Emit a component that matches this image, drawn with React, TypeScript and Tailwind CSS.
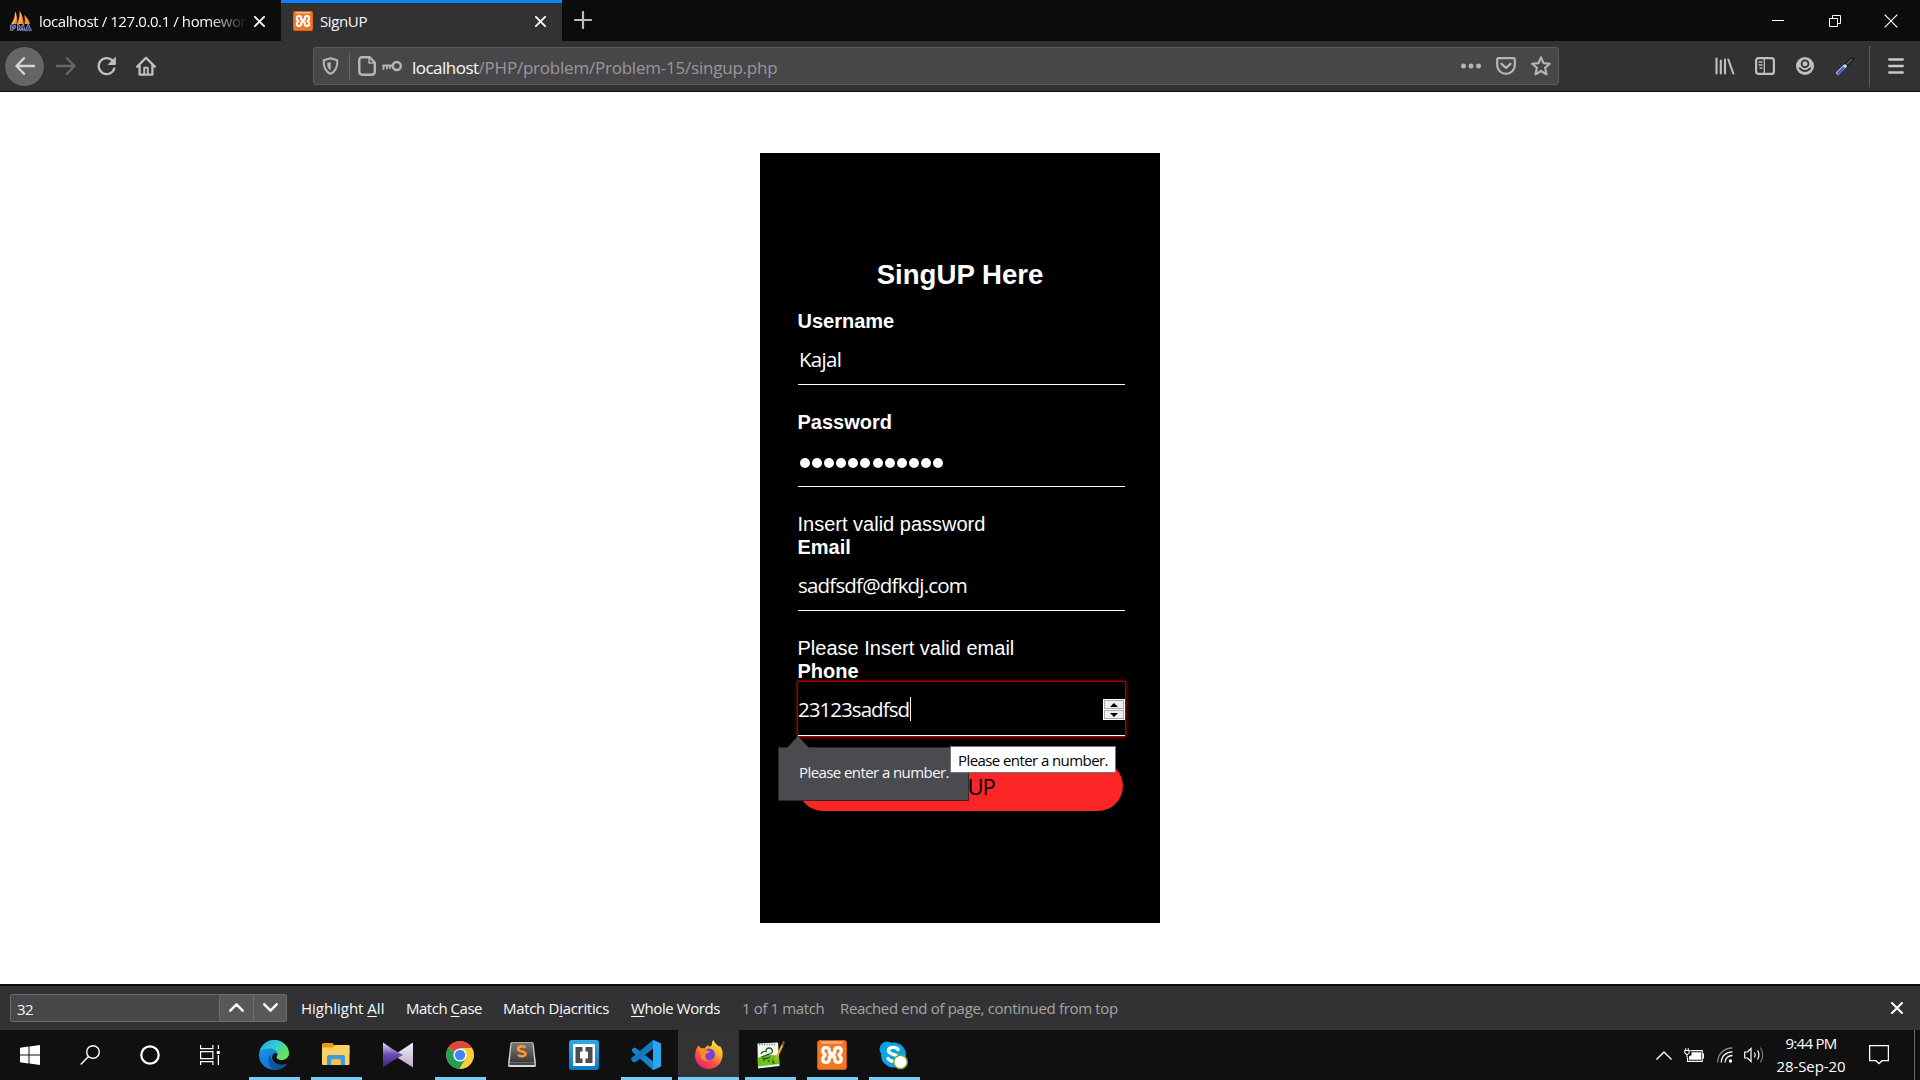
import type { ReactNode } from 'react';

function Glyph({ children, box = '0 0 20 20', cls = 'w-5 h-5 text-[#c0c0c1]' }: { children: ReactNode; box?: string; cls?: string }) {
  return (
    <svg viewBox={box} className={`block shrink-0 ${cls}`} fill="none" stroke="currentColor" strokeWidth="2.3" strokeLinecap="round" strokeLinejoin="round">
      {children}
    </svg>
  );
}

function Xampp({ cls }: { cls: string }) {
  return (
    <svg viewBox="0 0 30 30" className={`block shrink-0 ${cls}`}>
      <rect width="30" height="30" rx="3.5" fill="#f37623" />
      <rect x=".5" y=".5" width="29" height="29" rx="3" fill="none" stroke="#c9560d" />
      <path d="M3 1.6h24l-2 2H5z" fill="#fbb487" />
      <path
        d="M12.300 12.500V10.500C12 6.500 5.800 6.500 5.800 10.800c0 2.200 1.200 3 2.400 4.200-1.200 1.200-2.400 2-2.400 4.200 0 4.300 6.200 4.300 6.500.3v-2M17.700 12.500v-2c.3-4 6.500-4 6.500.3 0 2.200-1.200 3-2.400 4.200 1.200 1.200 2.400 2 2.400 4.200 0 4.300-6.200 4.300-6.500.3v-2M12.300 12q0 1.500 1.500 1.500h2.400q1.500 0 1.500-1.500M12.300 18q0-1.500 1.500-1.500h2.400q1.500 0 1.500 1.500"
        fill="none" stroke="#fff" strokeWidth="3.300" strokeLinecap="round" strokeLinejoin="round"
      />
    </svg>
  );
}

function TabBar() {
  return (
    <div className="flex h-[41px] bg-[#0c0c0d] text-[15px] text-[#f9f9fa]">
      <div className="flex w-[281px] items-center">
        <svg viewBox="0 0 22 22" className="ml-[10px] h-[22px] w-[22px] shrink-0">
          <path d="M1 14C4 10 5 6 5 1c2 4 3 8 1.500 13zM7 14c2-5 3-9 2.500-13.500 2.500 4 4 8 4 13.500zM14.500 14c.5-4 .5-6-.5-9 3 2 5 5 6 9z" fill="#f5922c" />
          <path d="M2 14.500C5 11 6 8 5.500 3.500M9 14c1.500-4 2-7 1.200-11" stroke="#ffd08a" strokeWidth=".8" fill="none" />
          <path d="M1.500 21v-5h3q1 2.500-3 2.500M8 21l.5-5 2.300 3 2.300-3 .7 5M16 21l2.300-5 2.500 5m-4-2h3" stroke="#b9bee6" strokeWidth="2.400" fill="none" />
          <path d="M1.500 21v-5h3q1 2.500-3 2.500M8 21l.5-5 2.300 3 2.300-3 .7 5M16 21l2.300-5 2.500 5m-4-2h3" stroke="#39427d" strokeWidth="1.300" fill="none" />
        </svg>
        <span className="ml-[7px] mt-[2px] w-[208px] whitespace-nowrap tracking-[-0.41px] [mask-image:linear-gradient(90deg,#000_82%,transparent_100%)]">localhost / 127.0.0.1 / homewor</span>
        <Glyph cls="ml-[7px] mt-px w-[11px] h-[11px] text-[#f9f9fa]" box="0 0 11 11"><path d="M.9.9l9.200 9.200M10.100.9L.9 10.100" strokeWidth="1.900" /></Glyph>
      </div>
      <div className="flex w-[281px] items-center border-t-[3px] border-[#0a84ff] bg-[#323234]">
        <Xampp cls="ml-[12px] -mt-[3px] h-5 w-5" />
        <span className="-mt-px ml-[7px] w-[208px] tracking-[-0.38px]">SignUP</span>
        <Glyph cls="ml-[7px] -mt-[2px] w-[11px] h-[11px] text-[#f9f9fa]" box="0 0 11 11"><path d="M.9.9l9.200 9.200M10.100.9L.9 10.100" strokeWidth="1.900" /></Glyph>
      </div>
      <Glyph cls="ml-[12px] mt-[11px] w-[18px] h-[18px] text-[#bdbdbe]" box="0 0 18 18"><path d="M9 1v16M1 9h16" strokeWidth="2.200" /></Glyph>
      <div className="ml-auto flex items-center pr-[22px] text-white">
        <svg viewBox="0 0 12 12" className="h-3 w-3" shapeRendering="crispEdges"><path d="M0 5.500h12" stroke="#fff" strokeWidth="1" /></svg>
        <svg viewBox="0 0 12 12" className="ml-[45px] h-3 w-3" fill="none" stroke="#fff"><path d="M.5 3.500h8v8h-8zM3.500 3V.5h8v8H9" /></svg>
        <svg viewBox="0 0 14 14" className="ml-[43px] h-[14px] w-[14px]" fill="none" stroke="#fff" strokeWidth="1.200"><path d="M.7.7l12.600 12.600M13.300.7L.7 13.300" /></svg>
      </div>
    </div>
  );
}

function NavBar() {
  return (
    <div className="flex h-[51px] items-center border-b border-[#0c0c0d] bg-[#323234]">
      <div className="ml-[4px] flex h-[41px] w-[41px] items-center justify-center rounded-full border border-[#2a2a2b] bg-[#656566]">
        <Glyph cls="w-5 h-5 text-[#d6d6d6]"><path d="M19 10H1.500M9 2.200L1.500 10 9 17.800" /></Glyph>
      </div>
      <Glyph cls="ml-[11px] w-5 h-5 text-[#68686a]"><path d="M1 10h17.500M11 2.200l7.500 7.800-7.500 7.800" /></Glyph>
      <Glyph cls="ml-[21px] w-5 h-5 text-[#c0c0c1]"><path d="M17.300 12.500A8 8 0 1 1 15.500 4.600" /><path d="M18.300 1.800v6.700h-6.700z" fill="currentColor" strokeWidth="1" /></Glyph>
      <Glyph cls="ml-[19px] w-5 h-5 text-[#c0c0c1]"><path d="M1.200 10.600L10 1.800l8.800 8.800M3.600 9.500v9.200h12.800V9.500" /><path d="M8.200 18v-6.200h3.600V18" strokeWidth="1.900" /></Glyph>
      <div className="ml-[157px] flex h-[38px] w-[1246px] items-center rounded-[3px] border border-[#5c5c5e] bg-[#474749]">
        <Glyph cls="ml-[8px] w-[17px] h-[18px] text-[#b6b6b7]" box="0 0 17 18"><path d="M8.500 1.200l6.800 2c.3 6-.8 11-6.800 13.600C2.500 14.200 1.400 9.200 1.700 3.200z" strokeWidth="2" /><path d="M8.600 5v8.400C6.200 12 5.200 9.500 5.200 5.900z" fill="currentColor" stroke="none" /></Glyph>
        <div className="ml-[10px] h-[26px] w-px bg-[#69696b]" />
        <Glyph cls="ml-[8px] w-[18px] h-5 text-[#b6b6b7]" box="0 0 18 20"><path d="M4 1.200h7.500l5.300 5.300V16a2.700 2.700 0 0 1-2.700 2.700H4A2.700 2.700 0 0 1 1.300 16V4A2.700 2.700 0 0 1 4 1.200z" strokeWidth="2.400" /><path d="M11 2v5h5" strokeWidth="1.500" /></Glyph>
        <Glyph cls="ml-[6px] w-[20px] h-[12px] text-[#b6b6b7]" box="0 0 20 12"><circle cx="14.800" cy="6" r="4" strokeWidth="2.400" /><path d="M10 5.500H1.200M1.500 6v3M5 6v2.500M8 6v2" strokeWidth="2" /></Glyph>
        <div className="ml-[10px] mt-[3px] whitespace-nowrap text-[17px] leading-6 text-[#98989a]"><span className="tracking-[-0.52px] text-[#f9f9fa]">localhost</span><span className="tracking-[-0.22px]">/PHP/problem/Problem-15/singup.php</span></div>
        <Glyph cls="ml-auto w-5 h-5 text-[#b6b6b7]"><circle cx="2.500" cy="10" r="2.500" fill="currentColor" stroke="none" /><circle cx="10" cy="10" r="2.500" fill="currentColor" stroke="none" /><circle cx="17.500" cy="10" r="2.500" fill="currentColor" stroke="none" /></Glyph>
        <Glyph cls="ml-[15px] w-5 h-[18px] text-[#b6b6b7]" box="0 0 20 18"><path d="M2.700 1.200h14.600c.9 0 1.500.6 1.500 1.400v5.500a8.800 8.800 0 0 1-17.600 0V2.600c0-.8.6-1.400 1.500-1.400z" strokeWidth="2.200" /><path d="M5.500 6.800l4.500 4.200 4.500-4.200" /></Glyph>
        <Glyph cls="ml-[15px] mr-[7px] w-5 h-5 text-[#b6b6b7]"><path d="M10 1.300l2.500 5.800 6.300.6-4.700 4.200 1.400 6.400L10 15l-5.500 3.300 1.400-6.400-4.700-4.200 6.300-.6z" strokeWidth="2.100" /></Glyph>
      </div>
      <Glyph cls="ml-[156px] w-[20px] h-[18px] text-[#c0c0c1]" box="0 0 20 18"><path d="M1.500 1.500v15M5.800 3.500v13M10 2.500v14M13.300 2.500l5 14" strokeWidth="2.100" /></Glyph>
      <Glyph cls="ml-[20px] w-5 h-[18px] text-[#c0c0c1]" box="0 0 20 18"><rect x="1.100" y="1.100" width="17.800" height="15.800" rx="2.500" strokeWidth="2.200" /><path d="M9.300 1.500v15M4 5h3M4 8h3M5 11h2" strokeWidth="1.300" /></Glyph>
      <Glyph cls="ml-[21px] w-[18px] h-[18px] text-[#c0c0c1]" box="0 0 18 18"><circle cx="9" cy="9" r="9" fill="currentColor" stroke="none" /><circle cx="9" cy="6.800" r="3.400" stroke="#323234" strokeWidth="1.800" /><path d="M3.800 11.200c2.400 3.600 8 3.600 10.400 0" stroke="#323234" strokeWidth="1.800" /></Glyph>
      <svg viewBox="0 0 18 18" className="ml-[22px] h-[18px] w-[18px]"><path d="M10 8l6-6" stroke="#1b1b1d" strokeWidth="4" strokeLinecap="round" /><path d="M11 7l5-5" stroke="#666" strokeWidth="1.500" /><path d="M2 16l7-7" stroke="#d5dbf2" strokeWidth="3.500" strokeLinecap="round" /><path d="M2.500 16l5-5" stroke="#3d62d8" strokeWidth="2.800" strokeLinecap="round" /></svg>
      <div className="ml-[15px] h-[41px] w-px bg-[#5c5c5e]" />
      <Glyph cls="ml-[18px] w-4 h-[16px] text-[#c8c8c9]" box="0 0 16 16"><path d="M1.200 1.500h13.600M1.200 8h13.600M1.200 14.500h13.600" /></Glyph>
    </div>
  );
}

const label = 'h-[23px] pt-px -ml-[0.5px] text-[20px] leading-[23px] font-bold';
const message = 'h-[23px] pt-px -ml-[0.5px] text-[20px] leading-[23px]';

function SignUpCard() {
  return (
    <div className="h-[770px] w-[400px] bg-black pl-[38px] pr-[35px] pt-[105px] font-['Liberation_Sans',Arial,sans-serif] text-white">
      <h1 className="mb-5 h-8 pr-[3px] pt-px text-center text-[27.6px] font-bold leading-8">SingUP Here</h1>
      <div className="-ml-[0.5px] h-[23px] text-[20px] font-bold leading-[23px]">Username</div>
      <div className="mb-[25px] flex h-[52px] items-center border-b border-white pl-px pt-[2px] font-['Open_Sans',sans-serif] text-[20.5px] tracking-[-0.7px]">Kajal</div>
      <div className={label}>Password</div>
      <div className="mb-[25px] flex h-[54px] items-center gap-[2.100px] border-b border-white pl-[2px] pt-[6px]">
        {Array.from({ length: 12 }, (_, i) => <span key={i} className="h-[10px] w-[10px] rounded-full bg-white" />)}
      </div>
      <div className={message}>Insert valid password</div>
      <div className={label}>Email</div>
      <div className="mb-[25px] flex h-[53px] items-center border-b border-white pt-[3px] font-['Open_Sans',sans-serif] text-[20.5px] tracking-[-0.8px]">sadfsdf@dfkdj.com</div>
      <div className={message}>Please Insert valid email</div>
      <div className={label}>Phone</div>
      <div className="relative mb-[25px] flex h-[54px] items-center border-b border-white font-['Open_Sans',sans-serif] text-[20.5px] shadow-[0_0_0_1px_#a40000,0_0_3px_1px_#e00000]">
        <span className="pt-[2px] tracking-[-0.95px]">23123sadfsd</span>
        <span className="ml-px mt-px h-6 w-px bg-white" />
        <div className="ml-auto mr-px mt-[2px] flex w-5 flex-col gap-px">
          <span className="flex h-[9px] items-center justify-center border border-[#aaa] bg-[#eee] outline outline-[0.5px] outline-white"><svg viewBox="0 0 8 4" className="h-1 w-2"><path d="M4 0l4 4H0z" /></svg></span>
          <span className="flex h-[9px] items-center justify-center border border-[#aaa] bg-[#eee] outline outline-[0.5px] outline-white"><svg viewBox="0 0 8 4" className="h-1 w-2"><path d="M4 4l4-4H0z" /></svg></span>
        </div>
        <div className="absolute left-[-20px] top-[65px] z-10 flex h-[54px] w-[191px] items-center border border-[#2b2b2e] bg-[#4a4a4f] pl-5 text-[15px] tracking-[-0.58px] text-[#f9f9fa]">
          <svg viewBox="0 0 24 13" className="absolute left-[7px] top-[-12px] h-[13px] w-6"><path d="M0 13L12 0l12 13z" fill="#4a4a4f" /></svg>
          <span className="-mt-[4px] whitespace-nowrap">Please enter a number.</span>
        </div>
        <div className="absolute left-[152px] top-[64px] z-20 flex h-[27px] w-[166px] items-center border border-[#767676] bg-white pl-[7px] text-[15px] tracking-[-0.58px] text-black">
          <span className="mt-px whitespace-nowrap">Please enter a number.</span>
        </div>
      </div>
      <button className="block h-[50px] w-[325px] rounded-[25px] bg-[#fb2525] pl-[2px] font-['Open_Sans',sans-serif] text-[22px] tracking-[-1px] text-black">SingUP</button>
    </div>
  );
}

function FindBar() {
  return (
    <div className="flex h-[46px] items-center border-t-2 border-[#0c0c0d] bg-[#323234] pl-[10px] text-[15px] text-[#f9f9fa]">
      <div className="-mt-px flex h-[28px] w-[277px] shrink-0 rounded-[2px] border border-[#6c6c6e] bg-[#474749]">
        <span className="w-[208px] pl-[6px] leading-[28px] tracking-[-0.6px]">32</span>
        <span className="flex w-[34px] items-center justify-center border-l border-[#6c6c6e] bg-[#58585a]"><Glyph cls="w-[15px] h-[9px] text-[#f9f9fa]" box="0 0 15 9"><path d="M1.300 7.700l6.200-6.300 6.200 6.300" strokeWidth="2.500" /></Glyph></span>
        <span className="flex flex-1 items-center justify-center border-l border-[#6c6c6e] bg-[#58585a]"><Glyph cls="w-[15px] h-[9px] text-[#f9f9fa]" box="0 0 15 9"><path d="M1.300 1.300l6.200 6.300 6.200-6.300" strokeWidth="2.500" /></Glyph></span>
      </div>
      <div className="flex whitespace-nowrap pl-[14px]">
        <span className="w-[105px]">Highlight <u className="underline-offset-2">A</u>ll</span>
        <span className="w-[97px] tracking-[-0.48px]">Match <u className="underline-offset-2">C</u>ase</span>
        <span className="w-[128px] tracking-[-0.31px]">Match D<u className="underline-offset-2">i</u>acritics</span>
        <span className="w-[111px] tracking-[-0.4px]"><u className="underline-offset-2">W</u>hole Words</span>
        <span className="w-[98px] tracking-[-0.37px] text-[#a5a5a6]">1 of 1 match</span>
        <span className="tracking-[-0.32px] text-[#a5a5a6]">Reached end of page, continued from top</span>
      </div>
      <Glyph cls="ml-auto mr-[17px] w-[12px] h-[12px] text-[#f9f9fa]" box="0 0 12 12"><path d="M1 1l10 10M11 1L1 11" strokeWidth="2.100" /></Glyph>
    </div>
  );
}

function TaskButton({ children, open = false, active = false }: { children: ReactNode; open?: boolean; active?: boolean }) {
  return (
    <div className={`flex h-[50px] w-[62px] flex-col items-center ${active ? 'border-l border-[#101010] bg-[#333]' : ''}`}>
      <div className="flex h-[47px] items-center pt-[3px]">{children}</div>
      {open && <div className={active ? 'h-[3px] w-full bg-[#76ccf9]' : 'h-[3px] w-[51px] bg-[#76ccf9]'} />}
    </div>
  );
}

const icon = 'h-[30px] w-[30px] block';

function Taskbar() {
  return (
    <div className="flex h-[50px] bg-[#101010] text-[15px] text-white">
      <div className="flex w-[60px] items-center justify-center"><svg viewBox="0 0 20 20" className="h-5 w-5" fill="#fff"><path d="M0 2.700l8.500-1.100v8H0zM9.500 1.400L20 0v9.600H9.500zM0 10.500h8.500v8L0 17.300zM9.500 10.500H20V20L9.500 18.600z" /></svg></div>
      <div className="flex w-[60px] items-center justify-center"><svg viewBox="0 0 20 20" className="h-5 w-5" fill="none" stroke="#fff" strokeWidth="1.400"><circle cx="13" cy="7" r="6.300" /><path d="M8.500 11.500L.7 19.500" /></svg></div>
      <div className="flex w-[60px] items-center justify-center"><svg viewBox="0 0 20 20" className="h-5 w-5" fill="none" stroke="#fff" strokeWidth="2.200"><circle cx="10" cy="10" r="8.700" /></svg></div>
      <div className="flex w-[63px] items-center justify-center pr-[3px]"><svg viewBox="0 0 20 20" className="h-5 w-5" fill="none" stroke="#fff" strokeWidth="1.200"><path d="M.6 0v3.600h12.300V0M.6 6.600h12.300v7H.6zM.6 20v-3.400h12.300V20M18.400 0v4M18.400 10v10" /><path d="M16.800 6h3v3h-3z" fill="#fff" stroke="none" /></svg></div>

      <TaskButton open>
        <svg viewBox="0 0 30 30" className={icon}>
          <defs>
            <linearGradient id="edgeTop" x1="0" y1="0" x2="1" y2=".6"><stop offset="0" stopColor="#23a7df" /><stop offset=".5" stopColor="#35c8d8" /><stop offset="1" stopColor="#6be34e" /></linearGradient>
            <linearGradient id="edgeLow" x1="0" y1="0" x2=".6" y2="1"><stop offset="0" stopColor="#1ba0e8" /><stop offset="1" stopColor="#0a6fd0" /></linearGradient>
          </defs>
          <circle cx="15" cy="15" r="15" fill="url(#edgeLow)" />
          <path d="M1 11C3 4 8.500 0 15 0c8.500 0 15 6 15 13 0 4.500-3 7-7 7-3.500 0-5.800-1.300-5.800-2.500 0-.9 1.200-1.500 1.200-3.500 0-3-3-5.500-7-5.500-5 0-8.500 1-10.400 2.500z" fill="url(#edgeTop)" />
          <path d="M17.500 17c-.5 1.500 2 3 5.500 3 3 0 6-1.500 7-5 .2 4-.8 7-2.200 9-6.500 2.500-14 0-14.800-6.500 0-3 2.500-5 4.500-4.500 1.800 1 .5 3 0 4z" fill="#101010" />
          <path d="M11.500 14.500c-.5 8 8 12.500 16.500 9-2 3.500-6 6.500-11.500 6.500C9.500 28 7.500 19.500 11.500 14.500z" fill="#12559f" />
        </svg>
      </TaskButton>
      <TaskButton open>
        <svg viewBox="0 0 30 30" className={icon}><path d="M1 4.500Q1 3 2.500 3h9l2 2.500H28.500v8H1z" fill="#e3a008" /><path d="M1 7.500h11l2-2.500h13.500q1 0 1 1v18q0 1-1 1H2q-1 0-1-1z" fill="#fdd265" /><path d="M6 25v-8q0-2 2-2h14q2 0 2 2v8h-4.500v-5.500h-9V25z" fill="#3d9be0" /><path d="M10.500 19.500h9V25h-9z" fill="#f7c34c" /></svg>
      </TaskButton>
      <TaskButton>
        <svg viewBox="0 0 30 30" className={icon}>
          <defs><linearGradient id="kmL" x1="0" y1="0" x2="0" y2="1"><stop offset="0" stopColor="#e6def6" /><stop offset=".5" stopColor="#6a4bb0" /><stop offset="1" stopColor="#3c2285" /></linearGradient><linearGradient id="kmR" x1="0" y1="0" x2="0" y2="1"><stop offset="0" stopColor="#f4f2f6" /><stop offset="1" stopColor="#b9a9cc" /></linearGradient></defs>
          <path d="M30 2.500v25L15 18l-1-5z" fill="url(#kmR)" /><path d="M0 2.500Q10 10 20 15 10 20 0 27.500z" fill="url(#kmL)" />
        </svg>
      </TaskButton>
      <TaskButton open>
        <svg viewBox="0 0 30 30" className={icon}><circle cx="15" cy="15" r="13.800" fill="#fcc934" /><path d="M15 15L3 8.100A13.800 13.800 0 0 1 27 8.100H15z" fill="#dc4a3d" /><path d="M15 15l-6-3L3 8.100a13.800 13.800 0 0 0 11.500 20.700L21 18z" fill="#1e9e57" /><path d="M15 8.100h12A13.800 13.800 0 0 1 14.500 28.800L21 18.500z" fill="#fccb3d" /><circle cx="15" cy="15" r="6.600" fill="#fff" /><circle cx="15" cy="15" r="5.200" fill="#4285f4" /></svg>
      </TaskButton>
      <TaskButton>
        <svg viewBox="0 0 30 30" className={icon}><defs><linearGradient id="subl" x1="0" y1="0" x2="0" y2="1"><stop offset="0" stopColor="#777" /><stop offset="1" stopColor="#3a3a3a" /></linearGradient></defs><path d="M3.500 3Q3.700 2.200 4.500 2.200h21q.8 0 1 .8l2.300 19v4q0 1-1 1H2.200q-1 0-1-1v-4z" fill="#d8d8d8" /><path d="M4.500 3h21L27.300 22.500H2.700z" fill="url(#subl)" /><path d="M2.500 22.500h25v2.500h-25z" fill="#444" /><path d="M18.500 7.500C16 5.500 11 6 11 9c0 3.200 7.500 1.800 7.500 4.800 0 3-5.500 3-7.500 1" fill="none" stroke="#ff9a27" strokeWidth="2.600" /></svg>
      </TaskButton>
      <TaskButton>
        <svg viewBox="0 0 30 30" className={icon}><defs><linearGradient id="brk" x1="0" y1="0" x2="0" y2="1"><stop offset="0" stopColor="#31aae4" /><stop offset="1" stopColor="#0d78bf" /></linearGradient></defs><rect width="30" height="30" rx="3" fill="url(#brk)" /><rect x="4" y="4" width="22" height="22" rx="1" fill="#fff" /><path d="M6.500 7h7v4.500H11v7h2.500V23h-7zM23.500 7h-7v4.500H19v7h-2.500V23h7z" fill="#4c4c4c" /></svg>
      </TaskButton>
      <TaskButton open>
        <svg viewBox="0 0 30 30" className={icon}><path d="M22 0l8 3.500v23L22 30 2 12.500Q-.5 10 2 8.200 3.200 7 5 8.200L22 21z" fill="#1684cc" /><path d="M22 0v9L5 21.800q-1.800 1.300-3.300 0l-1-1.300q-1-1.500 0-2.700z" fill="#1079c0" /><path d="M22 0l8 3.500v23L22 30z" fill="#2aa6f2" /><path d="M22 9v12l-8-6z" fill="#101010" /></svg>
      </TaskButton>
      <TaskButton open active>
        <svg viewBox="0 0 30 30" className={icon}>
          <defs><linearGradient id="ff" x1=".85" y1="0" x2=".25" y2="1"><stop offset="0" stopColor="#fff04a" /><stop offset=".35" stopColor="#ffb12c" /><stop offset=".65" stopColor="#ff5540" /><stop offset="1" stopColor="#ea1a72" /></linearGradient></defs>
          <path d="M4.500 5.500l2.500 3c1.300-.4 2.500-.4 3.500 0C12 6 14 5.500 14.500 5.200l.5 2 3-2.200c-.5-2 0-4 1.500-5 1 3 3 4 5 6.500l1.500-.500C28.500 9 29 13 28.500 16.500 27.500 24 22 29 14.500 29S1 23 1 15.500C1 11.500 2.500 8 4.500 5.500z" fill="url(#ff)" />
          <circle cx="15" cy="14.500" r="6" fill="#7643d5" /><path d="M4 8.500c3-.5 5 0 6.500.5 1.500.8 2.500 2 5.500 2.200-1 2-3.500 1.800-4.500 3.500-1 2.500 1 5.500 4 5.500-5 2-9.500-1.500-9-6.500-1-1.500-2-3-2.500-5.200z" fill="#ff8a2b" />
        </svg>
      </TaskButton>
      <TaskButton open>
        <svg viewBox="0 0 30 30" className={icon}><path d="M2.500 3.500L23 2.500l1.500 23.500L3 28.500z" fill="#f3f5f1" /><path d="M2.700 18Q12 13 24 16l.5 8L3 26.500z" fill="#6cc31f" /><path d="M6 14q1-3 5-2.500 0-3.500 3-3.500t3.500 3Q17 14 13 14.500L7 17M7 18q4 2 8-1M9 21q-1-3 4-3" fill="none" stroke="#2c5a20" strokeWidth="1.300" /><path d="M13 22l1.500-2M18 20v3h2" fill="none" stroke="#234d1a" strokeWidth="1.200" /><path d="M4 4.500h17" stroke="#777" strokeWidth="1.500" strokeDasharray="1 1.500" /><path d="M20.500 20L27.500 5" stroke="#e8a51d" strokeWidth="2.200" /><path d="M27.500 5l1.500-3.500" stroke="#a43b34" strokeWidth="2.200" /></svg>
      </TaskButton>
      <TaskButton open><Xampp cls="w-[30px] h-[30px]" /></TaskButton>
      <TaskButton open>
        <svg viewBox="0 0 30 30" className={icon}><circle cx="8" cy="9" r="7.500" fill="#0a9fe3" /><circle cx="20" cy="20" r="7.500" fill="#0790d5" /><circle cx="14.500" cy="15" r="12.500" fill="#0aa5e8" /><path d="M19 9.500C17 6.500 9.500 6.500 9.500 10.800c0 4.500 9.800 2.700 9.800 7.200 0 4.200-8 4.500-10.300.5" fill="none" stroke="#fff" strokeWidth="3.400" strokeLinecap="round" /><circle cx="21.500" cy="22" r="6.800" fill="#fff" stroke="#70a82c" strokeWidth="1.400" /></svg>
      </TaskButton>

      <div className="ml-auto flex items-center">
        <svg viewBox="0 0 16 9" className="h-[9px] w-4" fill="none" stroke="#fff" strokeWidth="1.400"><path d="M.5 8.500L8 1l7.500 7.500" /></svg>
        <svg viewBox="0 0 20 15" className="ml-[12px] h-[15px] w-5" fill="none" stroke="#fff" strokeWidth="1.100"><path d="M6.500 2.600h11.700v10.800H3.500V9.500M18.800 6h.7v4h-.7" /><path d="M7.500 4.300h9.500v7.500H5V8.500l2.500-1.500z" fill="#fff" stroke="none" /><path d="M.8 2.500h4.400v2.300L3 6.800.8 4.800zM1.700.3v2M4.300.3v2M3 6.800V9.500" /></svg>
        <svg viewBox="0 0 16 16" className="ml-[13px] h-4 w-4" fill="none" stroke="#fff" strokeWidth="1.300"><path d="M.7 15.500C.7 7 7 1 15.500 1" stroke="#8a8a8a" /><path d="M4.300 15.500C4.300 9 9 4.800 15.500 4.800M8 15.500c0-4 3-7 7.500-7" /><circle cx="13.500" cy="14" r="1.700" fill="#fff" stroke="none" /></svg>
        <svg viewBox="0 0 20 18" className="ml-[11px] h-[18px] w-5" fill="none" stroke="#fff" strokeWidth="1.200"><path d="M.7 6h2.800L7 2.500v13L3.500 12H.7zM10.500 6.500q1.500 2.500 0 5M13.500 4.500q2.800 4.500 0 9" /><path d="M16.300 1.500q5 7.500 0 15" stroke="#777" /></svg>
        <div className="-mt-px ml-[7px] flex w-[80px] flex-col items-center whitespace-nowrap leading-[23px]"><span className="tracking-[-0.7px]">9:44 PM</span><span className="tracking-[-0.08px]">28-Sep-20</span></div>
        <svg viewBox="0 0 20 20" className="ml-[18px] h-5 w-5" fill="none" stroke="#fff" strokeWidth="1.300"><path d="M.6.7h18.800v15H13l-3 3-3-3H.6z" /></svg>
        <div className="ml-[25px] mr-[5px] h-[50px] w-px bg-[#6a6a6a]" />
      </div>
    </div>
  );
}

export default function App() {
  return (
    <div className="flex h-[1080px] w-[1920px] flex-col overflow-hidden bg-white font-['Open_Sans','Noto_Sans',sans-serif]">
      <TabBar />
      <NavBar />
      <main className="flex flex-1 items-center justify-center bg-white"><SignUpCard /></main>
      <FindBar />
      <Taskbar />
    </div>
  );
}
